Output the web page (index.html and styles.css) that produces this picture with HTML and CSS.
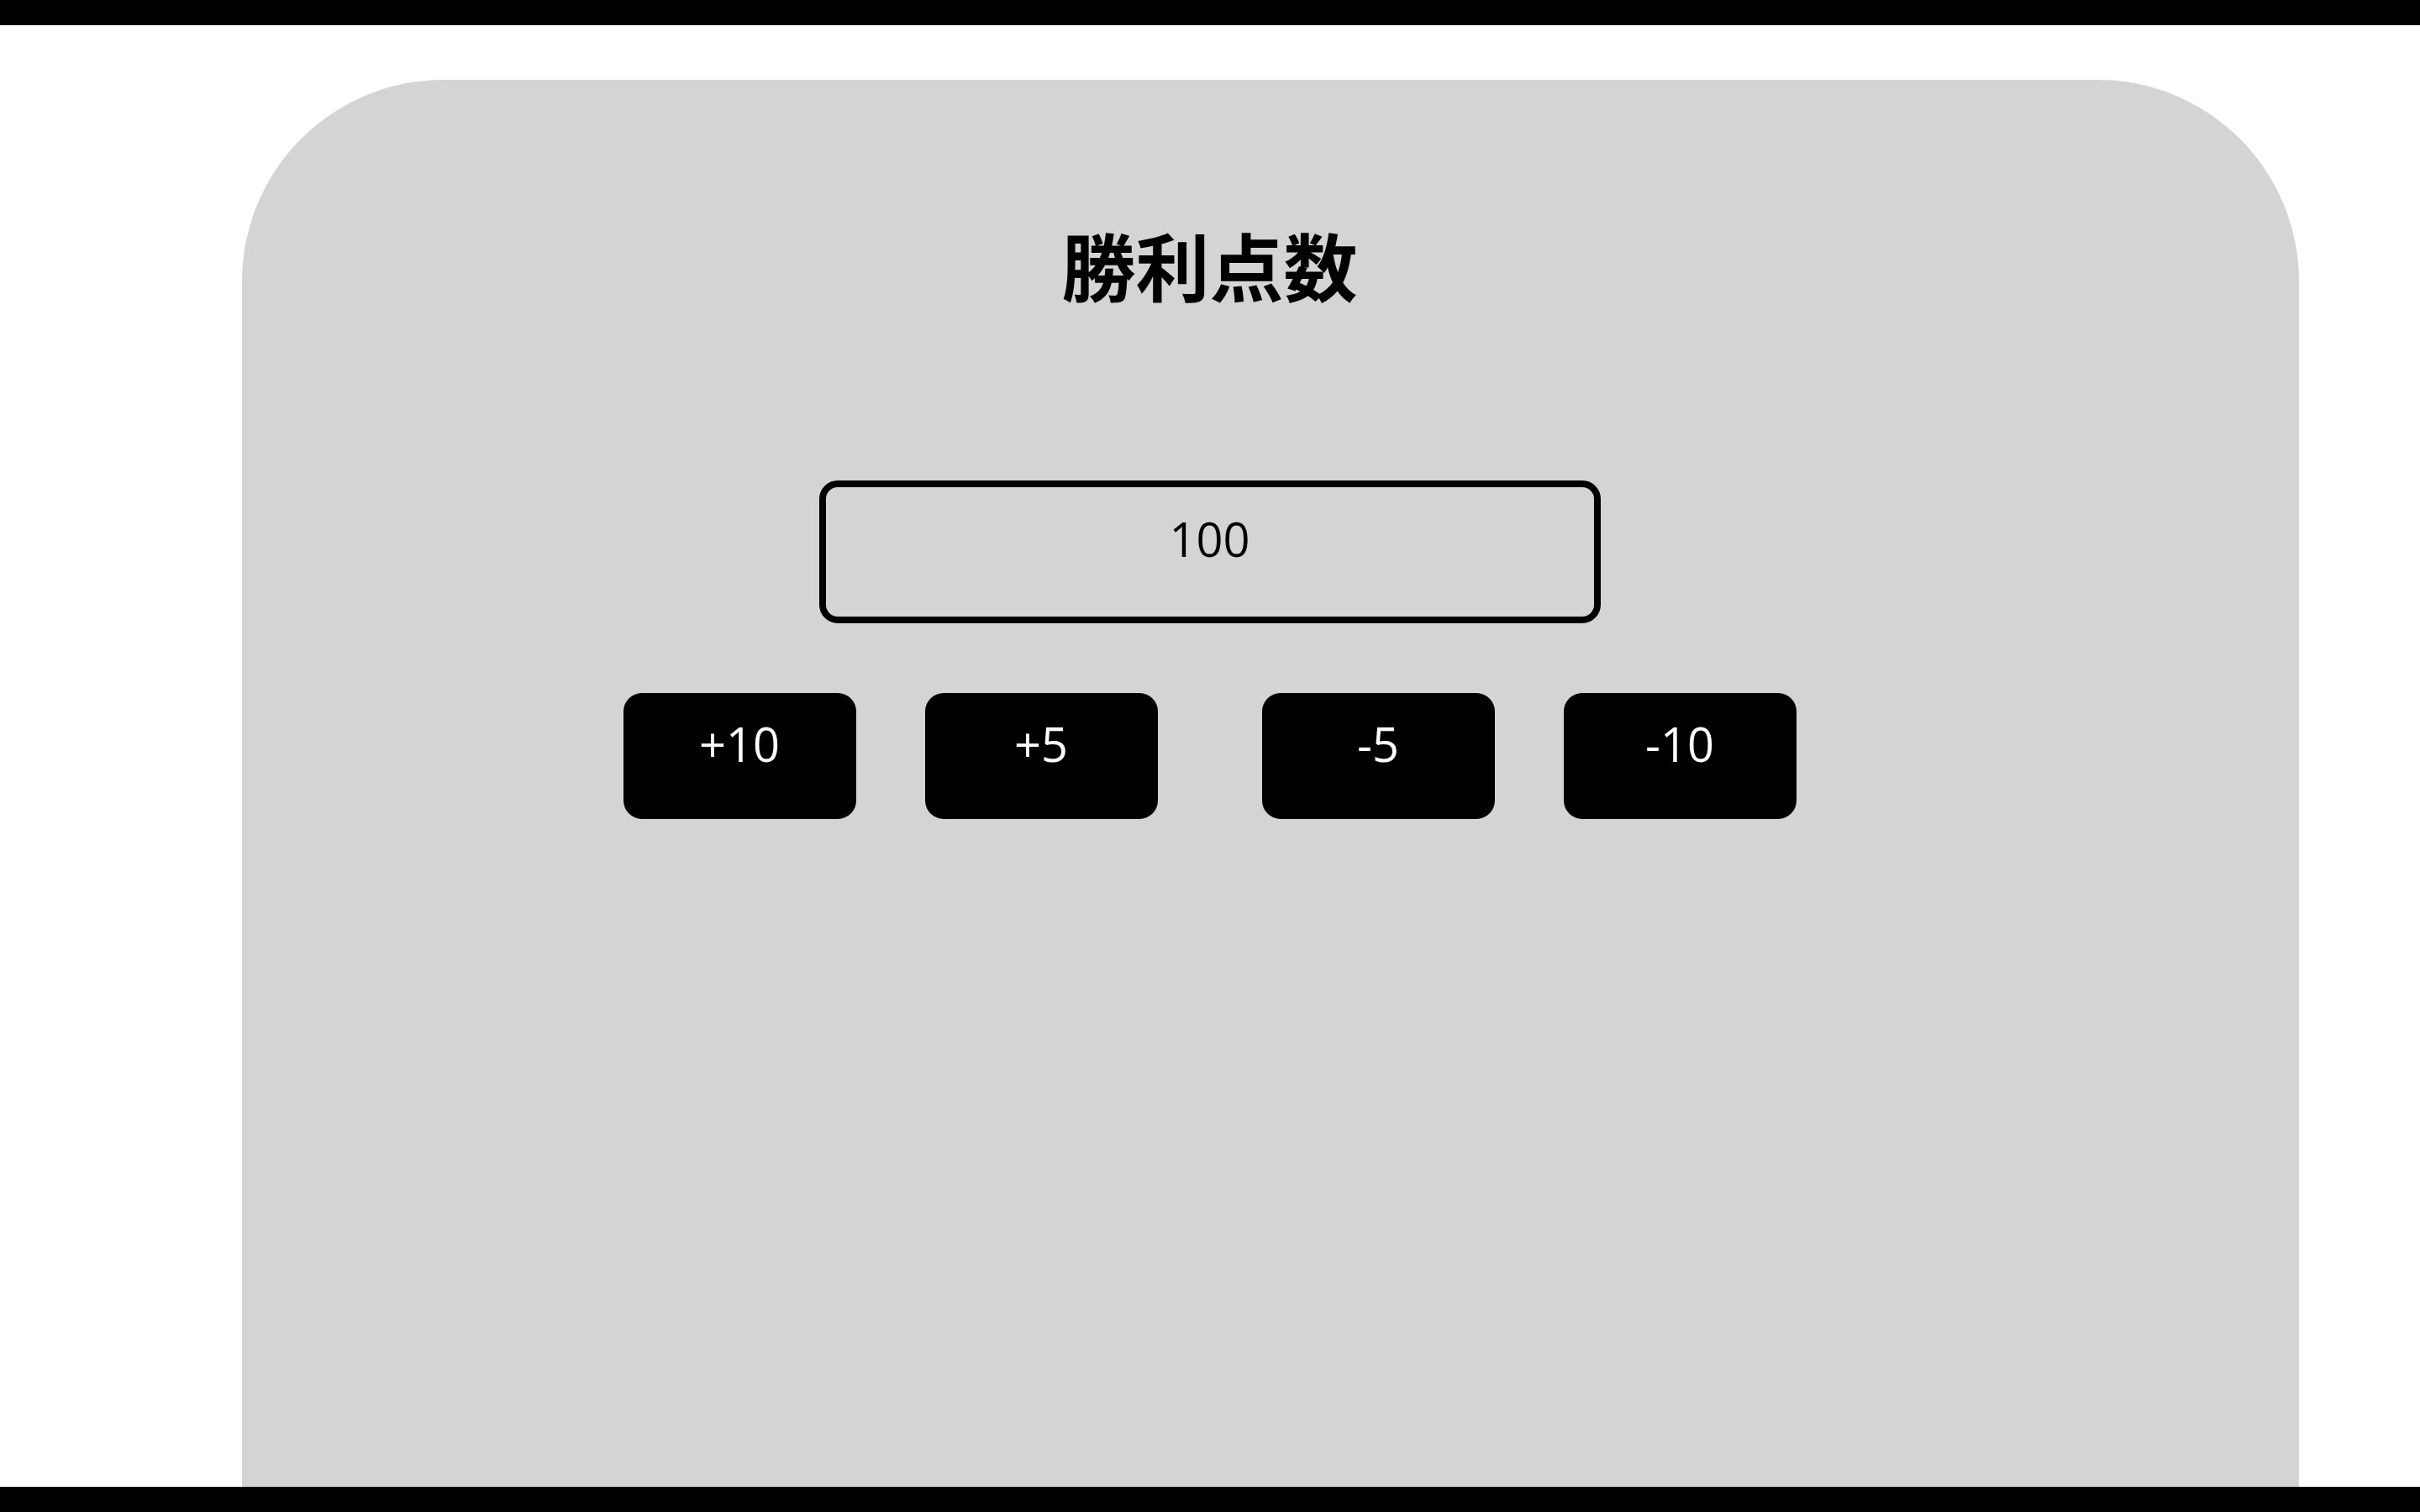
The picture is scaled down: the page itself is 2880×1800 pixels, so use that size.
FILE: index.html
```html
<!DOCTYPE html>
<html lang="ja">
<head>
<meta charset="utf-8">
<title>勝利点数</title>
<link rel="stylesheet" href="styles.css">
</head>
<body>
<div class="page">
  <header class="topbar"></header>
  <main class="stage">
    <section class="card">
      <h1 class="title">勝利点数</h1>
      <div class="score-field">100</div>
      <div class="controls">
        <div class="group">
          <button class="step">+10</button>
          <button class="step">+5</button>
        </div>
        <div class="group">
          <button class="step">-5</button>
          <button class="step">-10</button>
        </div>
      </div>
    </section>
  </main>
  <footer class="bottombar"></footer>
</div>
</body>
</html>
```
FILE: styles.css
```css
html, body {
  margin: 0;
  height: 100%;
}
body {
  background: #ffffff;
  font-family: "Open Sans", "Noto Sans CJK JP", sans-serif;
  overflow: hidden;
}
.page {
  display: flex;
  flex-direction: column;
  height: 100vh;
}
.topbar,
.bottombar {
  flex: none;
  height: 30px;
  background: #000000;
}
.stage {
  flex: 1;
  min-height: 0;
  overflow: hidden;
  padding-top: 65px;
  box-sizing: border-box;
}
.card {
  margin-left: 10%;
  width: 85%;
  height: 100%;
  box-sizing: border-box;
  background: #d4d4d4;
  border-radius: 240px 240px 0 0;
  padding: 155px 145px 0 0;
  display: flex;
  flex-direction: column;
  align-items: center;
}
.title {
  margin: 0;
  font-family: "Noto Sans CJK JP", sans-serif;
  font-weight: 700;
  font-size: 88px;
  line-height: 127px;
  color: #000000;
}
.score-field {
  margin-top: 195px;
  width: 930px;
  box-sizing: border-box;
  border: 8px solid #000000;
  border-radius: 22px;
  padding: 23px 0 55px;
  text-align: center;
  font-family: "Open Sans", sans-serif;
  font-size: 56px;
  line-height: 76px;
  color: #000000;
}
.controls {
  margin-top: 83px;
  display: flex;
  gap: 124px;
}
.group {
  display: flex;
  gap: 82px;
}
.step {
  display: block;
  width: 277px;
  height: 150px;
  box-sizing: border-box;
  border: 0;
  border-radius: 22px;
  background: #000000;
  color: #ffffff;
  font-family: "Open Sans", sans-serif;
  font-size: 56px;
  line-height: 76px;
  padding: 22px 0 52px;
  margin: 0;
}
```
